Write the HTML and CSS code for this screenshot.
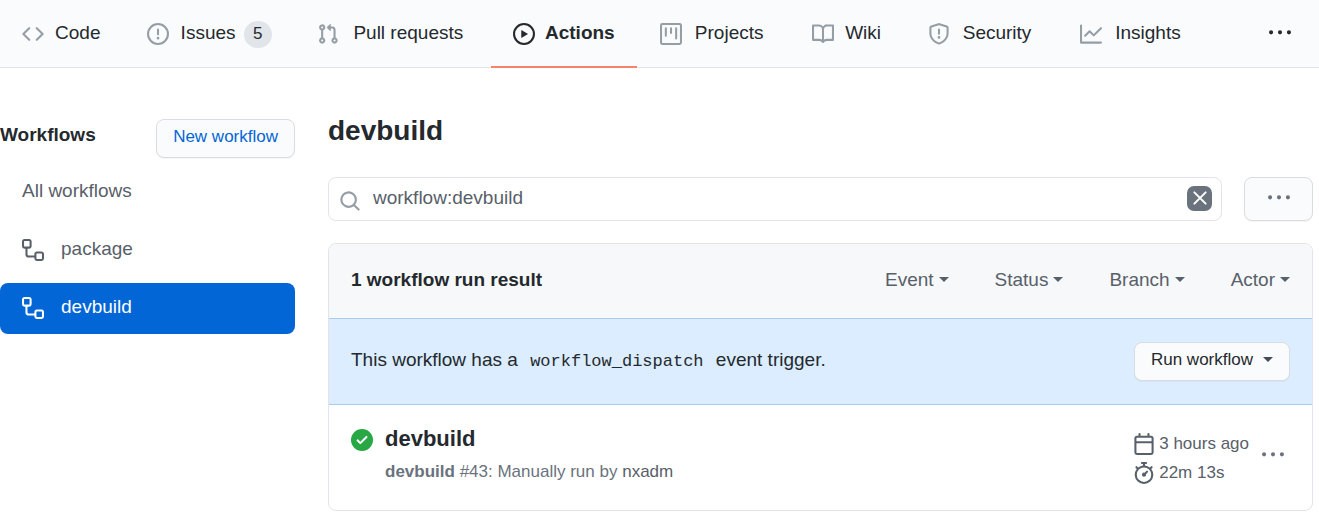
FILE: index.html
```html
<!DOCTYPE html>
<html lang="en">
<head>
<meta charset="utf-8">
<title>Actions · devbuild</title>
<link rel="stylesheet" href="styles.css">
</head>
<body>
<svg class="sprite" aria-hidden="true">
  <symbol id="code" viewBox="0 0 16 16"><path d="M4.72 3.22a.75.75 0 011.06 1.06L2.06 8l3.72 3.72a.75.75 0 11-1.06 1.06L.47 8.53a.75.75 0 010-1.06l4.25-4.25zm6.56 0a.75.75 0 10-1.06 1.06L13.94 8l-3.72 3.72a.75.75 0 101.06 1.06l4.25-4.25a.75.75 0 000-1.06l-4.25-4.25z"/></symbol>
  <symbol id="issue" viewBox="0 0 16 16"><path fill-rule="evenodd" d="M8 1.5a6.5 6.5 0 100 13 6.5 6.5 0 000-13zM0 8a8 8 0 1116 0A8 8 0 010 8zm9 3a1 1 0 11-2 0 1 1 0 012 0zm-.25-6.25a.75.75 0 00-1.5 0v3.5a.75.75 0 001.5 0v-3.5z"/></symbol>
  <symbol id="pull" viewBox="0 0 16 16"><path fill-rule="evenodd" d="M7.177 3.073L9.573.677A.25.25 0 0110 .854v4.792a.25.25 0 01-.427.177L7.177 3.427a.25.25 0 010-.354zM3.75 2.5a.75.75 0 100 1.5.75.75 0 000-1.5zm-2.25.75a2.25 2.25 0 113 2.122v5.256a2.251 2.251 0 11-1.5 0V5.372A2.25 2.25 0 011.5 3.25zM11 2.5h-1V4h1a1 1 0 011 1v5.628a2.251 2.251 0 101.5 0V5A2.5 2.5 0 0011 2.5zm1 10.25a.75.75 0 111.5 0 .75.75 0 01-1.5 0zM3.75 12a.75.75 0 100 1.5.75.75 0 000-1.5z"/></symbol>
  <symbol id="play" viewBox="0 0 16 16"><path fill-rule="evenodd" d="M1.5 8a6.5 6.5 0 1113 0 6.5 6.5 0 01-13 0zM8 0a8 8 0 100 16A8 8 0 008 0zM6.379 5.227A.25.25 0 006 5.442v5.117a.25.25 0 00.379.214l4.264-2.559a.25.25 0 000-.428L6.379 5.227z"/></symbol>
  <symbol id="project" viewBox="0 0 16 16"><path fill-rule="evenodd" d="M1.75 0A1.75 1.75 0 000 1.75v12.5C0 15.216.784 16 1.75 16h12.5A1.75 1.75 0 0016 14.25V1.75A1.75 1.75 0 0014.25 0H1.75zM1.5 1.75a.25.25 0 01.25-.25h12.5a.25.25 0 01.25.25v12.5a.25.25 0 01-.25.25H1.75a.25.25 0 01-.25-.25V1.75zM11.75 3a.75.75 0 00-.75.75v7.5a.75.75 0 001.5 0v-7.5a.75.75 0 00-.75-.75zm-8.25.75a.75.75 0 011.5 0v5.5a.75.75 0 01-1.5 0v-5.5zM8 3a.75.75 0 00-.75.75v3.5a.75.75 0 001.5 0v-3.5A.75.75 0 008 3z"/></symbol>
  <symbol id="book" viewBox="0 0 16 16"><path fill-rule="evenodd" d="M0 1.75A.75.75 0 01.75 1h4.253c1.227 0 2.317.59 3 1.501A3.744 3.744 0 0111.006 1h4.245a.75.75 0 01.75.75v10.5a.75.75 0 01-.75.75h-4.507a2.25 2.25 0 00-1.591.659l-.622.621a.75.75 0 01-1.06 0l-.622-.621A2.25 2.25 0 005.258 13H.75a.75.75 0 01-.75-.75V1.75zm8.755 3a2.25 2.25 0 012.25-2.25H14.5v9h-3.757c-.71 0-1.4.201-1.992.572l.004-7.322zm-1.504 7.324l.004-5.073-.002-2.253A2.25 2.25 0 005.003 2.5H1.5v9h3.757a3.75 3.75 0 011.994.574z"/></symbol>
  <symbol id="shield" viewBox="0 0 16 16"><path fill-rule="evenodd" d="M7.467.133a1.75 1.75 0 011.066 0l5.25 1.68A1.75 1.75 0 0115 3.48V7c0 1.566-.32 3.182-1.303 4.682-.983 1.498-2.585 2.813-5.032 3.855a1.7 1.7 0 01-1.33 0c-2.447-1.042-4.049-2.357-5.032-3.855C1.32 10.182 1 8.566 1 7V3.48a1.75 1.75 0 011.217-1.667l5.25-1.68zm.61 1.429a.25.25 0 00-.153 0l-5.25 1.68a.25.25 0 00-.174.238V7c0 1.358.275 2.666 1.057 3.86.784 1.194 2.121 2.34 4.366 3.297a.2.2 0 00.154 0c2.245-.956 3.582-2.104 4.366-3.298C13.225 9.666 13.5 8.36 13.5 7V3.48a.25.25 0 00-.174-.237l-5.25-1.68zM9 10.5a1 1 0 11-2 0 1 1 0 012 0zm-.25-5.75a.75.75 0 10-1.5 0v3a.75.75 0 001.5 0v-3z"/></symbol>
  <symbol id="graph" viewBox="0 0 16 16"><path fill-rule="evenodd" d="M1.5 1.75a.75.75 0 00-1.5 0v12.5c0 .414.336.75.75.75h14.5a.75.75 0 000-1.5H1.5V1.75zm14.28 2.53a.75.75 0 00-1.06-1.06L10 7.94 7.53 5.47a.75.75 0 00-1.06 0L3.22 8.72a.75.75 0 001.06 1.06L7 7.06l2.47 2.47a.75.75 0 001.06 0l5.25-5.25z"/></symbol>
  <symbol id="dots" viewBox="0 0 16 16"><path d="M8 9a1.5 1.5 0 100-3 1.5 1.5 0 000 3zM1.5 9a1.5 1.5 0 100-3 1.5 1.5 0 000 3zm13 0a1.5 1.5 0 100-3 1.5 1.5 0 000 3z"/></symbol>
  <symbol id="workflow" viewBox="0 0 16 16"><path fill-rule="evenodd" d="M0 1.75C0 .784.784 0 1.75 0h3.5C6.216 0 7 .784 7 1.75v3.5A1.75 1.75 0 015.25 7H4v4a1 1 0 001 1h4v-1.25C9 9.784 9.784 9 10.75 9h3.5c.966 0 1.75.784 1.75 1.75v3.5A1.75 1.75 0 0114.25 16h-3.5A1.75 1.75 0 019 14.25v-.75H5A2.5 2.5 0 012.5 11V7h-.75A1.75 1.75 0 010 5.25v-3.5zm1.75-.25a.25.25 0 00-.25.25v3.5c0 .138.112.25.25.25h3.5a.25.25 0 00.25-.25v-3.5a.25.25 0 00-.25-.25h-3.5zm9 9a.25.25 0 00-.25.25v3.5c0 .138.112.25.25.25h3.5a.25.25 0 00.25-.25v-3.5a.25.25 0 00-.25-.25h-3.5z"/></symbol>
  <symbol id="search" viewBox="0 0 16 16"><path fill-rule="evenodd" d="M11.5 7a4.499 4.499 0 11-8.998 0A4.499 4.499 0 0111.5 7zm-.82 4.74a6 6 0 111.06-1.06l3.04 3.04a.75.75 0 11-1.06 1.06l-3.04-3.04z"/></symbol>
  <symbol id="cross" viewBox="0 0 16 16"><path d="M3.5 3.5l9 9m0-9l-9 9" fill="none" stroke="currentColor" stroke-width="1.6" stroke-linecap="round"/></symbol>
  <symbol id="check" viewBox="0 0 16 16"><path fill-rule="evenodd" d="M8 16A8 8 0 108 0a8 8 0 000 16zm3.78-9.72a.75.75 0 00-1.06-1.06L6.75 9.19 5.28 7.72a.75.75 0 00-1.06 1.06l2 2a.75.75 0 001.06 0l4.5-4.5z"/></symbol>
  <symbol id="calendar" viewBox="0 0 16 16"><path fill-rule="evenodd" d="M4.75 0a.75.75 0 01.75.75V2h5V.75a.75.75 0 011.5 0V2h1.25c.966 0 1.75.784 1.75 1.75v10.5A1.75 1.75 0 0113.25 16H2.75A1.75 1.75 0 011 14.25V3.75C1 2.784 1.784 2 2.75 2H4V.75A.75.75 0 014.75 0zm0 3.5h8.5a.25.25 0 01.25.25V6h-11V3.75a.25.25 0 01.25-.25h2zm-2.25 4v6.75c0 .138.112.25.25.25h10.5a.25.25 0 00.25-.25V7.5h-11z"/></symbol>
  <symbol id="stopwatch" viewBox="0 0 16 16"><path fill-rule="evenodd" d="M5.75.75A.75.75 0 016.5 0h3a.75.75 0 010 1.5h-.75v1l-.001.041a6.718 6.718 0 013.464 1.435l.007-.006.75-.75a.75.75 0 111.06 1.06l-.75.75-.006.007a6.75 6.75 0 11-10.548 0L2.72 5.03l-.75-.75a.75.75 0 011.06-1.06l.75.75.007.006A6.718 6.718 0 017.25 2.541a.756.756 0 010-.041v-1H6.5a.75.75 0 01-.75-.75zM8 14.5A5.25 5.25 0 108 4a5.25 5.25 0 000 10.5zm.389-6.7l1.33-1.33a.75.75 0 111.061 1.06L9.45 8.861A1.502 1.502 0 018 10.75a1.5 1.5 0 11.389-2.95z"/></symbol>
</svg>

<nav class="tabs" aria-label="Repository">
  <a class="tab" href="#"><svg class="icon"><use href="#code"/></svg><span class="tab-label" data-label="Code">Code</span></a>
  <a class="tab" href="#"><svg class="icon"><use href="#issue"/></svg><span class="tab-label" data-label="Issues">Issues</span><span class="counter">5</span></a>
  <a class="tab" href="#"><svg class="icon"><use href="#pull"/></svg><span class="tab-label" data-label="Pull requests">Pull requests</span></a>
  <a class="tab selected" href="#" aria-current="page"><svg class="icon"><use href="#play"/></svg><span class="tab-label" data-label="Actions">Actions</span></a>
  <a class="tab" href="#"><svg class="icon"><use href="#project"/></svg><span class="tab-label" data-label="Projects">Projects</span></a>
  <a class="tab" href="#"><svg class="icon"><use href="#book"/></svg><span class="tab-label" data-label="Wiki">Wiki</span></a>
  <a class="tab" href="#"><svg class="icon"><use href="#shield"/></svg><span class="tab-label" data-label="Security">Security</span></a>
  <a class="tab" href="#"><svg class="icon"><use href="#graph"/></svg><span class="tab-label" data-label="Insights">Insights</span></a>
  <button class="icon-button tabs-more" type="button" aria-label="More tabs"><svg class="icon"><use href="#dots"/></svg></button>
</nav>

<div class="page">
  <aside class="sidebar">
    <div class="sidebar-head">
      <h2 class="sidebar-title">Workflows</h2>
      <a class="button button-link" href="#">New workflow</a>
    </div>
    <nav class="flows" aria-label="Workflows">
      <a class="flow" href="#"><span class="flow-name">All workflows</span></a>
      <a class="flow" href="#"><svg class="icon"><use href="#workflow"/></svg><span class="flow-name">package</span></a>
      <a class="flow current" href="#" aria-current="page"><svg class="icon"><use href="#workflow"/></svg><span class="flow-name">devbuild</span></a>
    </nav>
  </aside>

  <main class="main">
    <h1 class="title">devbuild</h1>
    <div class="toolbar">
      <form class="search">
        <svg class="icon search-icon"><use href="#search"/></svg>
        <input class="search-input" type="text" value="workflow:devbuild" aria-label="Filter workflow runs">
        <button class="clear" type="reset" aria-label="Clear filter"><svg class="clear-icon"><use href="#cross"/></svg></button>
      </form>
      <button class="button button-more" type="button" aria-label="Workflow options"><svg class="icon"><use href="#dots"/></svg></button>
    </div>

    <section class="box">
      <header class="box-head">
        <strong class="result">1 workflow run result</strong>
        <div class="filters">
          <button class="filter" type="button">Event<span class="caret"></span></button>
          <button class="filter" type="button">Status<span class="caret"></span></button>
          <button class="filter" type="button">Branch<span class="caret"></span></button>
          <button class="filter" type="button">Actor<span class="caret"></span></button>
        </div>
      </header>
      <div class="dispatch">
        <p class="dispatch-text">This workflow has a <code class="event">workflow_dispatch</code> event trigger.</p>
        <button class="button button-run" type="button">Run workflow<span class="caret"></span></button>
      </div>
      <article class="run">
        <svg class="icon run-status" role="img" aria-label="Succeeded"><use href="#check"/></svg>
        <div class="run-info">
          <a class="run-title" href="#">devbuild</a>
          <p class="run-meta"><b>devbuild</b> #43: Manually run by <a class="actor" href="#">nxadm</a></p>
        </div>
        <div class="run-times">
          <span class="time"><svg class="icon"><use href="#calendar"/></svg>3 hours ago</span>
          <span class="time"><svg class="icon"><use href="#stopwatch"/></svg>22m 13s</span>
        </div>
        <button class="icon-button run-more" type="button" aria-label="Run options"><svg class="icon"><use href="#dots"/></svg></button>
      </article>
    </section>
  </main>
</div>
</body>
</html>
```
FILE: styles.css
```css
* { box-sizing: border-box; }

body {
  margin: 0;
  background: #fff;
  color: #24292e;
  font: 19px/28px "Liberation Sans", Arial, sans-serif;
}

a { color: inherit; text-decoration: none; }
h1, h2, p { margin: 0; }
button, input { font: inherit; color: inherit; }

.sprite { display: none; }
.icon { width: 22px; height: 22px; flex: none; fill: currentColor; }

.caret {
  border: 5px solid transparent;
  border-top-color: currentColor;
  border-bottom: 0;
}

.icon-button { display: flex; padding: 0; border: 0; background: none; }

/* Repository tabs */
.tabs {
  display: flex;
  gap: 1px;
  height: 68px;
  background: #fafbfc;
  border-bottom: 1px solid #e1e4e8;
}
.tab {
  display: flex;
  align-items: center;
  gap: 10px;
  height: 68px;
  padding: 0 22px;
  border-bottom: 2px solid transparent;
  white-space: nowrap;
}
.tab .icon { color: #959da5; margin-top: 2px; }
.tab-label { text-align: center; }
/* Reserves the bold width so that selecting a tab moves nothing */
.tab-label::after {
  content: attr(data-label);
  display: block;
  height: 0;
  overflow: hidden;
  visibility: hidden;
  font-weight: 700;
}
.tab.selected { border-bottom-color: #f9826c; font-weight: 700; }
.tab.selected .icon { color: #24292e; }
.counter {
  min-width: 28px;
  margin: 2px 0 0 -4px;
  padding: 0 9px 2px;
  border-radius: 14px;
  background: #e1e4e8;
  font-size: 17px;
  line-height: 25px;
  text-align: center;
}
.tabs-more { align-items: center; margin-left: auto; padding: 0 28px 2px 0; }

/* Page columns */
.page {
  display: grid;
  grid-template-columns: 295px minmax(0, 1fr);
  gap: 33px;
  padding: 48px 6px 0 0;
}

.button {
  display: flex;
  align-items: center;
  justify-content: center;
  gap: 10px;
  height: 39px;
  padding: 0 16px 4px;
  border: 1px solid #d9dce0;
  border-radius: 8px;
  background: #fafbfc;
  box-shadow: 0 1px 0 rgba(27, 31, 35, .04);
  font-size: 17px;
  white-space: nowrap;
}
.button-link { color: #0366d6; }

/* Sidebar */
.sidebar { padding-top: 3px; }
.sidebar-head { display: flex; align-items: center; justify-content: space-between; }
.sidebar-title { padding-bottom: 8px; font-size: 19px; }
.flows { display: grid; gap: 7px; margin-top: 9px; }
.flow {
  display: flex;
  align-items: center;
  gap: 17px;
  height: 51px;
  padding: 0 22px 2px;
  border-radius: 8px;
  color: #586069;
}
.flow-name { padding-bottom: 2px; }
.flow.current { background: #0366d6; color: #fff; }

/* Search row */
.title { padding-top: 1px; font-size: 28px; line-height: 28px; }
.toolbar { display: flex; gap: 22px; margin-top: 32px; }
.search {
  display: flex;
  flex: 1;
  align-items: center;
  gap: 12px;
  height: 44px;
  padding: 0 9px 0 10px;
  border: 1px solid #e1e4e8;
  border-radius: 8px;
}
.search-icon { margin-top: 4px; color: #959da5; }
.search-input {
  flex: 1;
  min-width: 0;
  padding: 0 0 3px;
  border: 0;
  outline: 0;
  background: none;
  color: #586069;
}
.clear {
  display: grid;
  place-items: center;
  width: 25px;
  height: 25px;
  margin-bottom: 2px;
  padding: 0;
  border: 0;
  border-radius: 7px;
  background: #6a737d;
  color: #fff;
}
.clear-icon { width: 20px; height: 20px; }
.button-more { width: 69px; height: 44px; padding: 0 0 2px; color: #6a737d; }

/* Runs */
.box { margin-top: 22px; border: 1px solid #e1e4e8; border-radius: 8px; overflow: hidden; }
.box-head {
  display: flex;
  align-items: center;
  justify-content: space-between;
  height: 74px;
  padding: 0 22px 3px;
  background: #f6f8fa;
}
.filters { display: flex; gap: 46px; }
.filter {
  display: flex;
  align-items: center;
  gap: 5px;
  padding: 0;
  border: 0;
  background: none;
  color: #586069;
}
.dispatch {
  display: flex;
  align-items: center;
  justify-content: space-between;
  height: 87px;
  padding: 0 22px;
  border: solid #a9cbee;
  border-width: 1px 0;
  background: #dbedff;
}
.dispatch-text { padding-bottom: 4px; }
.event { padding: 0 7px; font: 17px "Liberation Mono", monospace; }
.button-run .caret { color: #444d56; }

.run { display: flex; padding: 20px 28px 23px 22px; }
.run-status { margin: 4px 12px 0 0; color: #28a745; }
.run-info { flex: 1; }
.run-title { font-size: 22px; font-weight: 700; }
.run-meta { margin-top: 4px; color: #6a737d; font-size: 17px; }
.actor { color: #586069; }
.run-times {
  display: grid;
  align-content: start;
  gap: 1px;
  margin-top: 5px;
  color: #586069;
  font-size: 17px;
}
.time { display: flex; align-items: center; gap: 4px; }
.run-more { margin: 19px 0 0 13px; align-self: flex-start; color: #6a737d; }
```
